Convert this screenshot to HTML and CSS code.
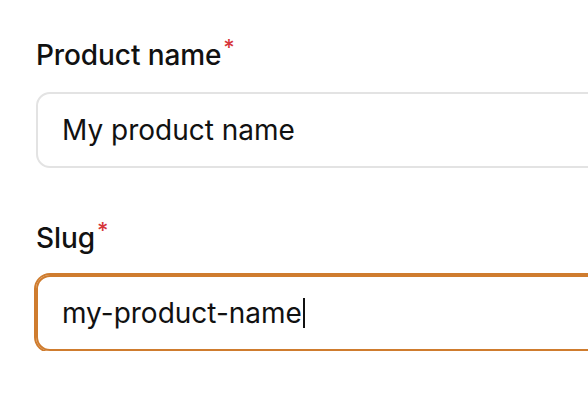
FILE: index.html
```html
<!DOCTYPE html>
<html lang="en">
<head>
<meta charset="utf-8">
<title>Product form</title>
<link rel="stylesheet" href="styles.css">
</head>
<body>
<form class="form">
  <div class="field">
    <label class="label">Product name<span class="req">*</span></label>
    <div class="input">My product name</div>
  </div>
  <div class="field">
    <label class="label">Slug<span class="req">*</span></label>
    <div class="input input--focus">my-product-name<span class="caret"></span></div>
  </div>
</form>
</body>
</html>
```

FILE: styles.css
```css
html, body {
  margin: 0;
  padding: 0;
  background: #ffffff;
  overflow: hidden;
}

body {
  font-family: Inter, "Noto Sans", "Liberation Sans", sans-serif;
  color: #111111;
}

.form {
  display: flex;
  flex-direction: column;
  gap: 52px;
  padding: 37px 0 0 36px;
  width: 700px;
}

.field {
  display: flex;
  flex-direction: column;
  gap: 19px;
}

.label {
  font-size: 28px;
  line-height: 36px;
  font-weight: 500;
  letter-spacing: -0.1px;
}

.req {
  color: #d6363a;
  font-size: 22px;
  font-weight: 500;
  vertical-align: top;
  line-height: 22px;
  margin-left: 2px;
  position: relative;
  top: -1px;
}

.input {
  box-sizing: border-box;
  height: 76px;
  border: 2px solid #e3e3e3;
  border-radius: 14px;
  padding: 0 24px;
  display: flex;
  align-items: center;
  font-size: 28px;
  font-weight: 400;
  color: #111111;
}

.input--focus {
  border-color: #cf7c2e;
  box-shadow: 0 0 0 2px #cf7c2e;
}

.caret {
  display: inline-block;
  width: 2px;
  height: 30px;
  background: #111;
  margin-left: 1px;
}
```
